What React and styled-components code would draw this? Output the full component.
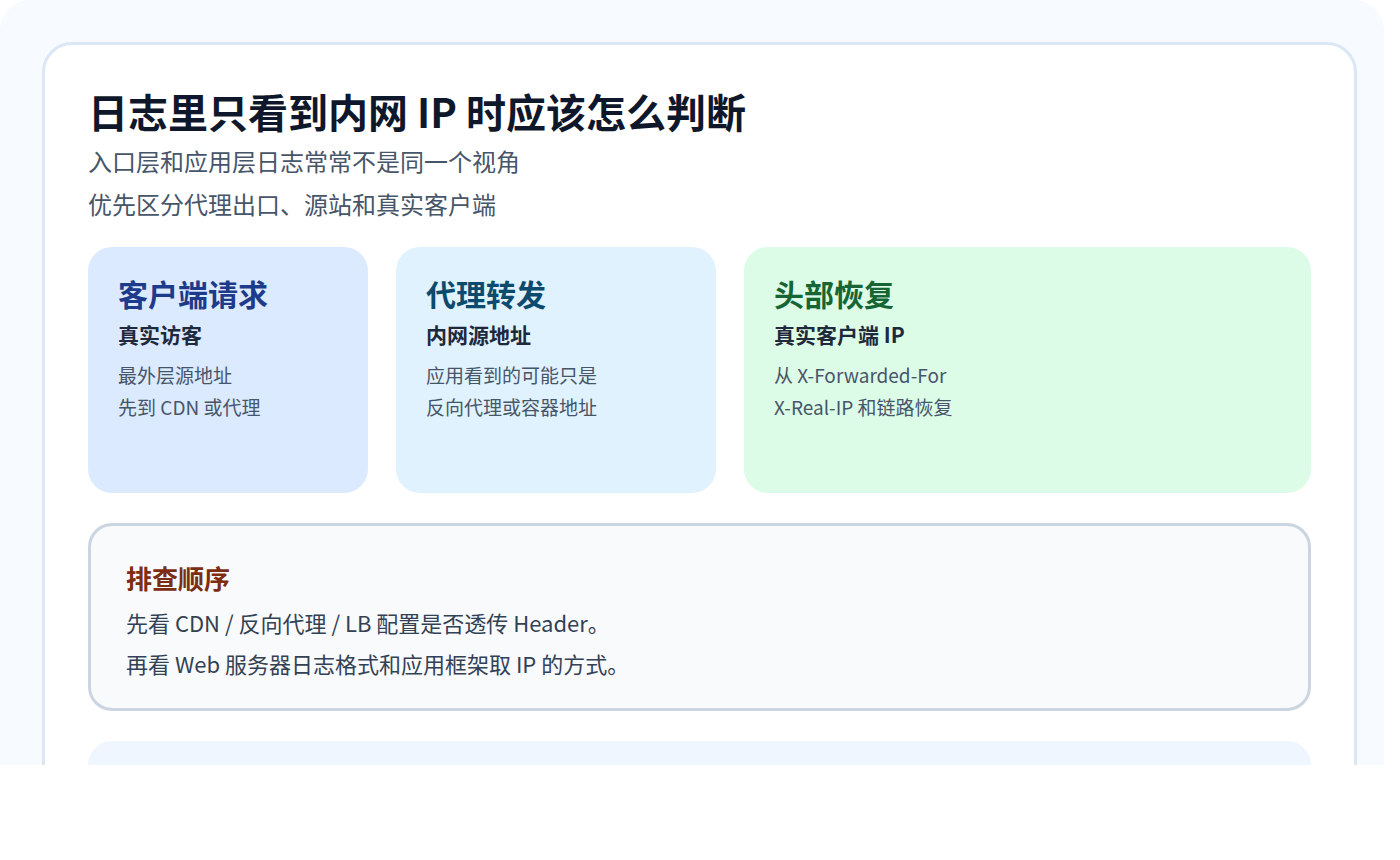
import React from 'react';
import styled, { createGlobalStyle } from 'styled-components';

const Global = createGlobalStyle`
  body { margin: 0; background: #fff; font-family: "Noto Sans CJK SC", "Noto Sans", sans-serif; }
  * { box-sizing: border-box; }
`;

const Stage = styled.div`
  width: 1384px;
  height: 765px;
  overflow: hidden;
  background: #f7faff;
  border-radius: 30px 30px 0 0;
  padding: 42px 0 0 42px;
`;

const Card = styled.div`
  width: 1315px;
  background: #fff;
  border: 3px solid #dbe7f6;
  border-radius: 30px;
  padding: 38px 43px 60px 43px;
`;

const Title = styled.h1`
  margin: 0;
  font-size: 40px;
  line-height: 56px;
  font-weight: 700;
  color: #0f172a;
`;

const Sub = styled.p`
  margin: 0;
  font-size: 24px;
  line-height: 43px;
  color: #475569;
`;

const Row = styled.div`
  display: grid;
  grid-template-columns: 280px 320px 1fr;
  gap: 28px;
  margin-top: 22px;
`;

const Tile = styled.div`
  height: 246px;
  border-radius: 24px;
  padding: 24px 30px;
  background: ${p => p.$bg};
`;

const TileTitle = styled.div`
  font-size: 30px;
  font-weight: 700;
  line-height: 44px;
  color: ${p => p.$c};
`;

const TileSub = styled.div`
  font-size: 21px;
  font-weight: 700;
  line-height: 38px;
  color: #1e293b;
  margin-bottom: 6px;
`;

const TileText = styled.div`
  font-size: 19px;
  line-height: 32px;
  color: #475569;
`;

const Box = styled.div`
  margin-top: 30px;
  border: 3px solid #cbd5e1;
  border-radius: 24px;
  background: #f8fafc;
  padding: 30px 35px 24px;
`;

const BoxTitle = styled.div`
  font-size: 26px;
  font-weight: 700;
  line-height: 44px;
  color: #7c2d12;
  margin-bottom: 2px;
`;

const BoxText = styled.div`
  font-size: 22px;
  line-height: 41px;
  color: #334155;
`;

const Next = styled.div`
  margin-top: 30px;
  height: 120px;
  border-radius: 24px;
  background: #eff6ff;
`;

const tiles = [
  { t: '客户端请求', s: '真实访客', l: ['最外层源地址', '先到 CDN 或代理'], bg: '#dbeafe', c: '#1e3a8a' },
  { t: '代理转发', s: '内网源地址', l: ['应用看到的可能只是', '反向代理或容器地址'], bg: '#e0f2fe', c: '#0c4a6e' },
  { t: '头部恢复', s: '真实客户端 IP', l: ['从 X-Forwarded-For', 'X-Real-IP 和链路恢复'], bg: '#dcfce7', c: '#166534' },
];

export default function App() {
  return (
    <Stage>
      <Global />
      <Card>
        <Title>日志里只看到内网 IP 时应该怎么判断</Title>
        <Sub>入口层和应用层日志常常不是同一个视角</Sub>
        <Sub>优先区分代理出口、源站和真实客户端</Sub>
        <Row>
          {tiles.map(x => (
            <Tile key={x.t} $bg={x.bg}>
              <TileTitle $c={x.c}>{x.t}</TileTitle>
              <TileSub>{x.s}</TileSub>
              {x.l.map(l => <TileText key={l}>{l}</TileText>)}
            </Tile>
          ))}
        </Row>
        <Box>
          <BoxTitle>排查顺序</BoxTitle>
          <BoxText>先看 CDN / 反向代理 / LB 配置是否透传 Header。</BoxText>
          <BoxText>再看 Web 服务器日志格式和应用框架取 IP 的方式。</BoxText>
        </Box>
        <Next />
      </Card>
    </Stage>
  );
}
